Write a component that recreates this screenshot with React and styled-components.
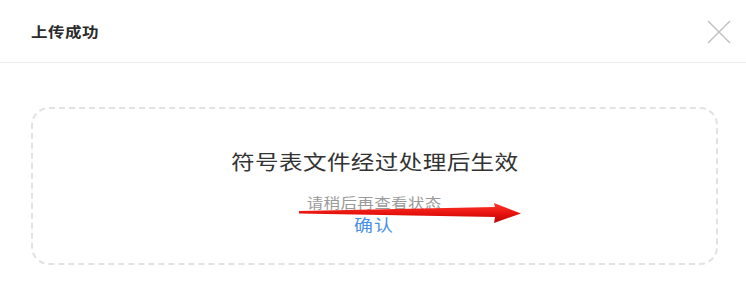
import React from 'react';
import styled, { createGlobalStyle } from 'styled-components';

const GlobalStyle = createGlobalStyle`
  html, body {
    margin: 0;
    padding: 0;
    background: #fff;
  }
  body {
    font-family: "Noto Sans CJK SC", "Noto Sans", sans-serif;
  }
`;

const Dialog = styled.div`
  width: 746px;
  height: 290px;
  background: #fff;
  overflow: hidden;
`;

const Header = styled.div`
  display: flex;
  align-items: center;
  justify-content: space-between;
  height: 63px;
  padding: 0 14px 0 31px;
  border-bottom: 1px solid #ebebeb;
  box-sizing: border-box;
`;

/* the capture is a little wide, so glyphs are stretched to match */
const Title = styled.h3`
  margin: 0;
  font-size: 14px;
  font-weight: 600;
  letter-spacing: 0.4px;
  color: #2b2b2b;
  line-height: 20px;
  transform: scaleX(1.18);
  transform-origin: left center;
`;

const Close = styled.button`
  display: flex;
  align-items: center;
  justify-content: center;
  width: 26px;
  height: 26px;
  padding: 0;
  border: none;
  background: none;
  margin-top: 1px;
`;

const Body = styled.div`
  padding: 44px 28px 0 31px;
`;

const DropZone = styled.div`
  position: relative;
  box-sizing: border-box;
  width: 687px;
  height: 158px;
  padding-top: 39px;
  border: 2px dashed #e2e2e2;
  border-radius: 18px;
  display: flex;
  flex-direction: column;
  align-items: center;
`;

const Message = styled.div`
  font-size: 20px;
  line-height: 28px;
  letter-spacing: 0.3px;
  color: #333;
  transform: scaleX(1.18);
`;

const Hint = styled.div`
  margin-top: 16px;
  font-size: 14px;
  line-height: 20px;
  letter-spacing: 0.3px;
  color: #9a9a9a;
  transform: scaleX(1.18);
`;

const Confirm = styled.a`
  margin-top: 2px;
  font-size: 16px;
  line-height: 20px;
  letter-spacing: 1px;
  color: #4a8fe6;
  cursor: pointer;
  transform: scaleX(1.18);
`;

const Arrow = styled.svg`
  position: absolute;
  left: 266px;
  top: 94px;
`;

function CloseIcon() {
  return (
    <svg width="24" height="24" viewBox="0 0 24 24">
      <path d="M1 1 L23 23 M23 1 L1 23" stroke="#bdbdbd" strokeWidth="1.3" fill="none" />
    </svg>
  );
}

function RedArrow() {
  return (
    <Arrow width="224" height="22" viewBox="0 0 224 22">
      <defs>
        <linearGradient id="arrowRed" x1="0" y1="0" x2="0" y2="1">
          <stop offset="0" stopColor="#ff3a2e" />
          <stop offset="0.55" stopColor="#e5110c" />
          <stop offset="1" stopColor="#b70806" />
        </linearGradient>
      </defs>
      <path
        d="M0 8 L196 4 L195 0 L222 10.5 L195 20 L196 14 L0 10.5 Z"
        fill="url(#arrowRed)"
      />
    </Arrow>
  );
}

export default function App() {
  return (
    <Dialog>
      <GlobalStyle />
      <Header>
        <Title>上传成功</Title>
        <Close aria-label="关闭">
          <CloseIcon />
        </Close>
      </Header>
      <Body>
        <DropZone>
          <Message>符号表文件经过处理后生效</Message>
          <Hint>请稍后再查看状态</Hint>
          <Confirm>确认</Confirm>
          <RedArrow />
        </DropZone>
      </Body>
    </Dialog>
  );
}
